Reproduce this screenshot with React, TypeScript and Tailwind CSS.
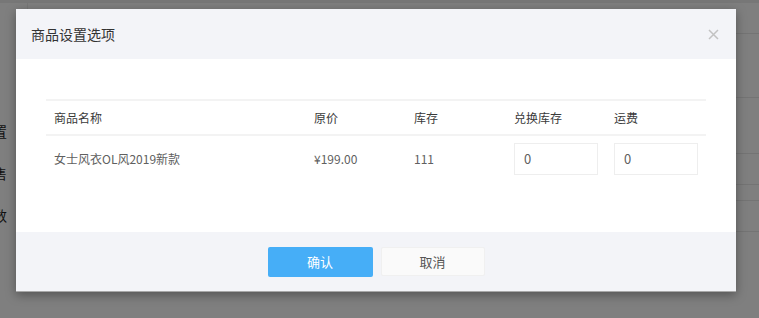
import React from "react";

const font = { fontFamily: '"Noto Sans CJK SC", "Noto Sans", sans-serif' };

export default function App() {
  return (
    <div
      className="relative w-[759px] h-[318px] overflow-hidden bg-[#7f7f7f]"
      style={font}
    >
      {/* page behind the overlay */}
      <div className="absolute inset-0">
        <div className="h-[3px] bg-[#777777]" />
        <div className="absolute left-[27px] top-0 h-[10px] w-px bg-[#777777]" />
        <div className="absolute right-0 top-0 w-[24px] h-full flex flex-col">
          <div className="h-[33px]" />
          <div className="h-px bg-[#747474]" />
          <div className="h-[63px]" />
          <div className="h-px bg-[#747474]" />
          <div className="h-[55px]" />
          <div className="h-px bg-[#747474]" />
          <div className="h-[30px]" />
          <div className="h-px bg-[#747474]" />
          <div className="h-[15px]" />
          <div className="h-px bg-[#747474]" />
          <div className="h-[30px]" />
          <div className="h-px bg-[#747474]" />
        </div>
        <div className="absolute left-[-7px] top-[123px] flex flex-col gap-[26px] text-[14px] leading-[16px] text-[#111]">
          <span>置</span>
          <span>售</span>
          <span>数</span>
        </div>
      </div>

      {/* dialog */}
      <div className="absolute left-[16px] top-[9px] w-[720px] bg-white shadow-[0_3px_10px_rgba(0,0,0,0.35)] border-b border-[#a8a8a8]">
        <div className="h-[50px] bg-[#f3f4f8] flex items-center justify-between pl-[15px] pr-[17px]">
          <span className="text-[14px] text-[#333]">商品设置选项</span>
          <svg width="11" height="11" viewBox="0 0 11 11">
            <path d="M1 1L10 10M10 1L1 10" stroke="#c2c2c2" strokeWidth="1.5" />
          </svg>
        </div>
        <div className="h-[173px] pt-[40px] px-[30px]">
          <div className="border-t-2 border-[#f3f3f3] text-[12px]">
            <div className="flex h-[35px] items-center border-b-2 border-[#f3f3f3] text-[#3a3a3a]">
              <div className="w-[260px] pl-[8px]">商品名称</div>
              <div className="w-[100px] pl-[8px]">原价</div>
              <div className="w-[100px] pl-[8px]">库存</div>
              <div className="w-[100px] pl-[8px]">兑换库存</div>
              <div className="w-[100px] pl-[8px]">运费</div>
            </div>
            <div className="flex items-center pt-[7px] text-[#606060]">
              <div className="w-[260px] pl-[8px]">女士风衣OL风2019新款</div>
              <div className="w-[100px] pl-[8px]">¥199.00</div>
              <div className="w-[100px] pl-[8px]">111</div>
              <div className="w-[100px] pl-[8px]">
                <div className="w-[84px] h-[32px] border border-[#eeeeee] flex items-center pl-[9px] text-[13px] text-[#606060]">
                  0
                </div>
              </div>
              <div className="w-[100px] pl-[8px]">
                <div className="w-[84px] h-[32px] border border-[#eeeeee] flex items-center pl-[9px] text-[13px] text-[#606060]">
                  0
                </div>
              </div>
            </div>
          </div>
        </div>
        <div className="h-[59px] bg-[#f3f4f8] flex items-center justify-center gap-[8px]">
          <button className="w-[105px] h-[30px] rounded-[2px] bg-[#46aef7] text-white text-[13px]">
            确认
          </button>
          <button className="w-[104px] h-[29px] rounded-[2px] bg-[#fafafa] border border-[#f0f0f0] text-[#555] text-[13px]">
            取消
          </button>
        </div>
      </div>
    </div>
  );
}
